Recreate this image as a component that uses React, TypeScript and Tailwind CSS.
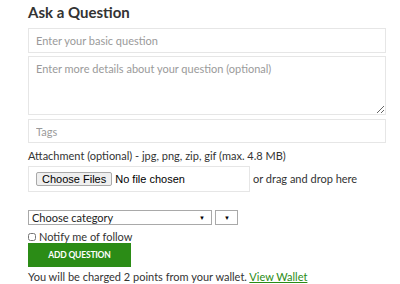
export default function App() {
  return (
    <div className="w-[400px] h-[284px] overflow-hidden bg-white font-['Lato','Noto_Sans',sans-serif] text-[#333]">
      <div className="pl-[28px] w-[386px]">
        <h1 className="h-[28px] pt-[2px] text-[15px] font-bold leading-[20px] text-[#333]">Ask a Question</h1>

        <input
          type="text"
          placeholder="Enter your basic question"
          className="block w-full h-[25px] px-[7px] text-[11px] border border-[#e6e6e6] placeholder:text-[#9a9a9a] outline-none"
        />
        <textarea
          placeholder="Enter more details about your question (optional)"
          className="block w-full h-[59px] mt-[3px] px-[7px] pt-[5px] text-[11px] leading-[14px] border border-[#e6e6e6] placeholder:text-[#9a9a9a] outline-none resize-y"
        />
        <input
          type="text"
          placeholder="Tags"
          className="block w-full h-[24px] mt-[4px] px-[7px] text-[11px] border border-[#e6e6e6] placeholder:text-[#9a9a9a] outline-none"
        />

        <p className="mt-[6px] text-[11px] leading-[14px] text-[#333]">
          Attachment (optional) - jpg, png, zip, gif (max. 4.8 MB)
        </p>

        <div className="flex items-center mt-[3px]">
          <div className="flex items-center w-[222px] h-[26px] px-[7px] border border-[#e6e6e6]">
            <span className="px-[5px] h-[14px] leading-[12px] border border-[#a9a9a9] rounded-[2px] bg-[#efefef] text-[11px] font-['Liberation_Sans',Arial,sans-serif] text-black">
              Choose Files
            </span>
            <span className="ml-[3px] text-[11px] font-['Liberation_Sans',Arial,sans-serif] text-black">No file chosen</span>
          </div>
          <span className="ml-[3px] text-[11px] text-[#333]">or drag and drop here</span>
        </div>

        <div className="flex items-center mt-[18px] gap-[3px]">
          <div className="flex items-center justify-between w-[184px] h-[15px] pl-[3px] pr-[6px] border border-[#a9a9a9] bg-white">
            <span className="text-[11px] leading-[13px] text-[#222]">Choose category</span>
            <span className="text-[6px] text-black">▼</span>
          </div>
          <div className="flex items-center justify-end w-[23px] h-[15px] pr-[7px] border border-[#a9a9a9] bg-white">
            <span className="text-[6px] text-black">▼</span>
          </div>
        </div>

        <label className="flex items-center mt-[5px] h-[13px]">
          <input type="checkbox" className="w-[8px] h-[8px] m-0 mr-[3px]" />
          <span className="text-[11px] leading-[13px] text-[#333]">Notify me of follow</span>
        </label>

        <button className="flex items-center justify-center w-[103px] h-[24px] bg-[#2b8c16] text-white text-[8.5px] font-bold tracking-[-0.2px]">
          ADD QUESTION
        </button>

        <p className="mt-[3px] text-[11px] leading-[14px] text-[#333] whitespace-nowrap">
          You will be charged 2 points from your wallet.{' '}
          <a className="text-[#2b8c16] underline">View Wallet</a>
        </p>
      </div>
    </div>
  );
}
